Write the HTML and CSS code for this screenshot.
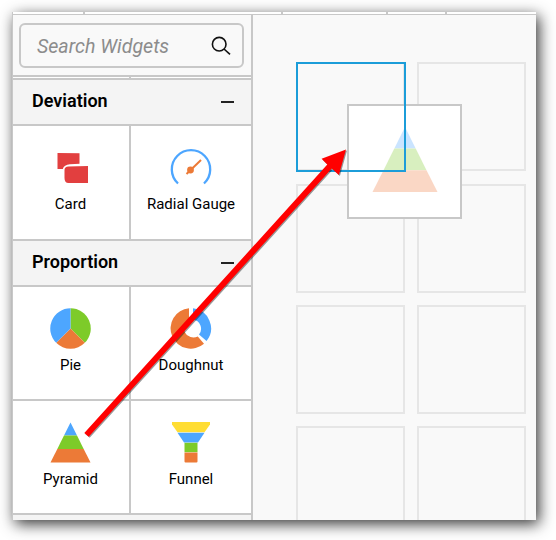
FILE: index.html
```html
<!DOCTYPE html>
<html lang="en">
<head>
<meta charset="utf-8">
<title>Widgets</title>
<link rel="stylesheet" href="styles.css">
</head>
<body>
<div class="window">
  <div class="toolbar"><i class="t1"></i><i class="t2"></i><i class="t3"></i><i class="t4"></i></div>
  <div class="main">
    <aside class="sidebar">
      <div class="search">
        <div class="search-box">
          <span>Search Widgets</span>
          <svg width="20" height="20" viewBox="0 0 20 20" fill="none" stroke="#111" stroke-width="1.6"><circle cx="8.2" cy="8.2" r="6.8"/><path d="M13 13l6 5.400"/></svg>
        </div>
      </div>
      <div class="sliver"><i></i></div>
      <h2 class="group">Deviation<i class="minus"></i></h2>
      <div class="grid">
        <div class="tile">
          <svg width="42" height="42" viewBox="0 0 42 42" fill="#e23f3f"><path d="M7.500 4L29.500 4.300V14.700L20 15.200Q14 15.600 12.800 20H7.500z"/><path d="M18.500 17.500L38 17V34H18.500Q14.500 34 14.500 29V21Q14.500 17.500 18.500 17.500z"/></svg>
          <span>Card</span>
        </div>
        <div class="tile">
          <svg width="42" height="42" viewBox="0 0 42 42" fill="none"><path d="M8 34.500A19.200 19.200 0 1 1 34 34.500" stroke="#4da6ff" stroke-width="2.300"/><path d="M16.500 25L31 11" stroke="#ec7a37" stroke-width="2"/><circle cx="20.500" cy="21" r="3.400" fill="#ec7a37"/></svg>
          <span>Radial Gauge</span>
        </div>
      </div>
      <h2 class="group">Proportion<i class="minus"></i></h2>
      <div class="grid">
        <div class="tile short">
          <svg width="42" height="42" viewBox="0.5 0.5 42 42"><path d="M21 21V.8A20.200 20.200 0 0 1 35.300 35.300z" fill="#7dcb29"/><path d="M21 21L35.300 35.300A20.200 20.200 0 0 1 6.700 35.300z" fill="#ec7a37"/><path d="M21 21L6.700 35.300A20.200 20.200 0 0 1 21 .8z" fill="#4da6ff"/></svg>
          <span>Pie</span>
        </div>
        <div class="tile short">
          <svg width="42" height="42" viewBox="0 0.5 42 42"><path d="M19 .8A20.200 20.200 0 1 0 34 36.200L27.800 29A9.300 9.300 0 1 1 19 12z" fill="#ec7a37"/><path d="M23 .8A20.200 20.200 0 0 1 36.500 33.600L29 27A9.300 9.300 0 0 0 23 12z" fill="#4da6ff"/></svg>
          <span>Doughnut</span>
        </div>
        <div class="tile short">
          <svg width="42" height="42" viewBox="0.5 0.5 42 42"><path d="M21 1L27.500 14H14.500z" fill="#4da6ff"/><path d="M14.500 14H27.500L34.200 27.500H7.800z" fill="#7dcb29"/><path d="M7.800 27.500H34.200L41 41H1z" fill="#ec7a37"/></svg>
          <span>Pyramid</span>
        </div>
        <div class="tile short">
          <svg width="42" height="42" viewBox="0 0.5 42 42"><path d="M2 .5H40V3L34.500 10.800H7.500L2 3z" fill="#ffdd33"/><path d="M7.500 11.200H34.500L28 21H14z" fill="#4da6ff"/><path d="M14.500 21.300H27.500V30.700H14.500z" fill="#7dcb29"/><path d="M14.500 31H27.500V40Q27.500 41 26.500 41H15.500Q14.500 41 14.500 40z" fill="#ec7a37"/></svg>
          <span>Funnel</span>
        </div>
      </div>
    </aside>
    <section class="canvas">
      <div class="slot"></div><div class="slot"></div>
      <div class="slot"></div><div class="slot"></div>
      <div class="slot"></div><div class="slot"></div>
      <div class="slot"></div><div class="slot"></div>
    </section>
  </div>
</div>
<div class="ghost">
  <svg width="66" height="66" viewBox="0 0 66 66"><path d="M33 0L43.700 21.500H22.300z" fill="#cae4ff"/><path d="M22.300 21.500H43.700L54.500 43.300H11.500z" fill="#d8efbf"/><path d="M11.500 43.300H54.500L65.500 65H.5z" fill="#fad7c5"/></svg>
</div>
<div class="target"></div>
<svg class="arrow" width="556" height="540" viewBox="0 0 556 540"><path d="M84.300 433L327.300 164.500L321.600 158.700L346 149.600L338.900 175L331.800 168.600L88.700 436.800z" fill="#f00"/></svg>
</body>
</html>
```
FILE: styles.css
```css
* { box-sizing: border-box; }
body {
  margin: 0;
  padding: 12px 20px 20px 12px;
  width: 556px;
  height: 540px;
  overflow: hidden;
  position: relative;
  background: #fff;
  font-family: Roboto, sans-serif;
  color: #000;
}
.window {
  height: 508px;
  overflow: hidden;
  border-left: 1px solid #c8c8c8;
  background: #f9f9f9;
  box-shadow: 3px 4px 14px rgba(0, 0, 0, .8);
}
.toolbar {
  height: 3px;
  display: flex;
  background: #fff;
  border-bottom: 1px solid #c8c8c8;
}
.toolbar i { width: 2px; background: #c8c8c8; }
.t1 { margin-left: 70px; }
.t2 { margin-left: 196px; }
.t3 { margin-left: 103px; }
.t4 { margin-left: 57px; }
.main { display: flex; height: 505px; }
.sidebar {
  width: 240px;
  flex: none;
  overflow: hidden;
  border-right: 2px solid #c8c8c8;
  background: #f4f4f4;
}
.search {
  height: 62px;
  padding: 8px 7px 0 6px;
  background: #f9f9f9;
  border-bottom: 2px solid #c8c8c8;
}
.search-box {
  height: 45px;
  display: flex;
  align-items: center;
  justify-content: space-between;
  padding: 0 11px 0 16px;
  border: 2px solid #c8c8c8;
  border-radius: 6px;
  font-size: 19.6px;
  font-style: italic;
  font-weight: 400;
  color: #8c8c8c;
}
.search-box span { padding-top: 2px; }
.sliver { height: 1px; background: #fff; }
.sliver i { display: block; width: 2px; height: 1px; margin-left: 116px; background: #c8c8c8; }
.group {
  height: 48px;
  margin: 0;
  padding: 0 17px 4px 19px;
  display: flex;
  align-items: center;
  justify-content: space-between;
  border-top: 2px solid #c8c8c8;
  border-bottom: 2px solid #c8c8c8;
  font-size: 18px;
  font-weight: 600;
}
.minus { width: 13px; height: 2px; margin-top: 3px; background: #222; }
.grid {
  display: grid;
  grid-template-columns: 116px 120px;
  gap: 2px;
  background: #c8c8c8;
}
.grid:last-child { border-bottom: 2px solid #c8c8c8; }
.tile {
  height: 113px;
  padding-top: 22px;
  display: flex;
  flex-direction: column;
  align-items: center;
  background: #fff;
  font-size: 15px;
  line-height: 18px;
}
.tile:nth-child(odd) { padding-right: 1px; }
.tile span { margin-top: 4px; }
.tile svg { margin-top: 1px; }
.short { height: 112px; padding-top: 20px; }
.short span { margin-top: 6px; }
.canvas {
  flex: 1;
  display: grid;
  grid-template-columns: 109px 109px;
  grid-template-rows: 110px 109px 109px 109px;
  gap: 12px;
  padding: 47px 0 0 43px;
}
.slot { height: 109px; border: 2px solid #e6e6e6; }
.ghost {
  position: absolute;
  left: 347px;
  top: 104px;
  width: 115px;
  height: 115px;
  padding: 21px 0 0 23px;
  border: 2px solid #c8c8c8;
  background: #fff;
}
.target {
  position: absolute;
  left: 296px;
  top: 62px;
  width: 110px;
  height: 110px;
  border: 2px solid #1c9dd9;
}
.arrow {
  position: absolute;
  left: 0;
  top: 0;
  filter: drop-shadow(1px 1.5px .6px rgba(0, 0, 0, .4));
}
```
